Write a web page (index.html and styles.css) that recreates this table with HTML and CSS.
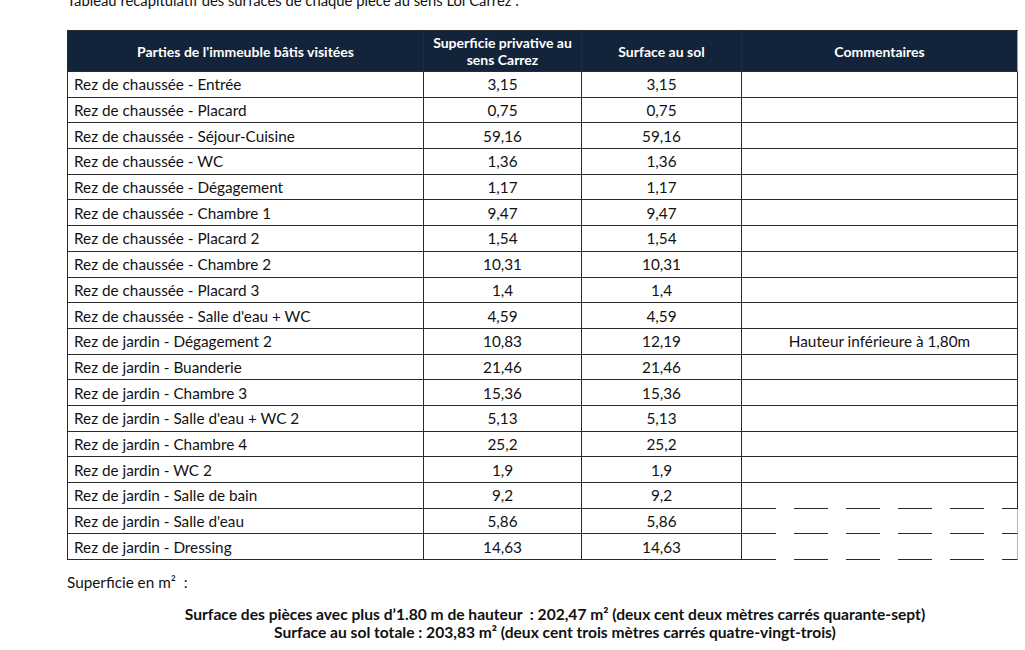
FILE: index.html
```html
<!DOCTYPE html>
<html lang="fr">
<head>
<meta charset="utf-8">
<title>Tableau récapitulatif Loi Carrez</title>
<link rel="stylesheet" href="styles.css">
</head>
<body>
<div class="page">
  <p class="title">Tableau récapitulatif des surfaces de chaque pièce au sens Loi Carrez :</p>
  <table class="surfaces">
    <colgroup>
      <col class="c-room"><col class="c-carrez"><col class="c-sol"><col class="c-comment">
    </colgroup>
    <thead>
      <tr>
        <th>Parties de l'immeuble bâtis visitées</th>
        <th>Superficie privative au<br>sens Carrez</th>
        <th>Surface au sol</th>
        <th>Commentaires</th>
      </tr>
    </thead>
    <tbody>
      <tr><td>Rez de chaussée - Entrée</td><td class="num">3,15</td><td class="num">3,15</td><td></td></tr>
      <tr><td>Rez de chaussée - Placard</td><td class="num">0,75</td><td class="num">0,75</td><td></td></tr>
      <tr><td>Rez de chaussée - Séjour-Cuisine</td><td class="num">59,16</td><td class="num">59,16</td><td></td></tr>
      <tr><td>Rez de chaussée - WC</td><td class="num">1,36</td><td class="num">1,36</td><td></td></tr>
      <tr><td>Rez de chaussée - Dégagement</td><td class="num">1,17</td><td class="num">1,17</td><td></td></tr>
      <tr><td>Rez de chaussée - Chambre 1</td><td class="num">9,47</td><td class="num">9,47</td><td></td></tr>
      <tr><td>Rez de chaussée - Placard 2</td><td class="num">1,54</td><td class="num">1,54</td><td></td></tr>
      <tr><td>Rez de chaussée - Chambre 2</td><td class="num">10,31</td><td class="num">10,31</td><td></td></tr>
      <tr><td>Rez de chaussée - Placard 3</td><td class="num">1,4</td><td class="num">1,4</td><td></td></tr>
      <tr><td>Rez de chaussée - Salle d'eau + WC</td><td class="num">4,59</td><td class="num">4,59</td><td></td></tr>
      <tr><td>Rez de jardin - Dégagement 2</td><td class="num">10,83</td><td class="num">12,19</td><td class="num">Hauteur inférieure à 1,80m</td></tr>
      <tr><td>Rez de jardin - Buanderie</td><td class="num">21,46</td><td class="num">21,46</td><td></td></tr>
      <tr><td>Rez de jardin - Chambre 3</td><td class="num">15,36</td><td class="num">15,36</td><td></td></tr>
      <tr><td>Rez de jardin - Salle d'eau + WC 2</td><td class="num">5,13</td><td class="num">5,13</td><td></td></tr>
      <tr><td>Rez de jardin - Chambre 4</td><td class="num">25,2</td><td class="num">25,2</td><td></td></tr>
      <tr><td>Rez de jardin - WC 2</td><td class="num">1,9</td><td class="num">1,9</td><td></td></tr>
      <tr><td>Rez de jardin - Salle de bain</td><td class="num">9,2</td><td class="num">9,2</td><td class="faded"></td></tr>
      <tr><td>Rez de jardin - Salle d'eau</td><td class="num">5,86</td><td class="num">5,86</td><td class="faded light-edge"></td></tr>
      <tr><td>Rez de jardin - Dressing</td><td class="num">14,63</td><td class="num">14,63</td><td class="faded light-edge"></td></tr>
    </tbody>
  </table>
  <p class="unit">Superficie en m² &nbsp;:</p>
  <div class="summary">
    <p>Surface des pièces avec plus d’1.80 m de hauteur &nbsp;: 202,47 m² (deux cent deux mètres carrés quarante-sept)</p>
    <p>Surface au sol totale : 203,83 m² (deux cent trois mètres carrés quatre-vingt-trois)</p>
  </div>
</div>
</body>
</html>
```

FILE: styles.css
```css
html, body {
  margin: 0;
  padding: 0;
  background: #ffffff;
}

body {
  font-family: "Lato", "Liberation Sans", sans-serif;
  color: #111111;
  overflow: hidden;
  height: 650px;
}

.page {
  padding-left: 67px;
  width: 950px;
}

.title {
  margin: -9px 0 0 0;
  font-size: 14.8px;
  line-height: 18px;
  height: 18px;
  white-space: nowrap;
}

.surfaces {
  margin-top: 21px;
  width: 950px;
  table-layout: fixed;
  border-collapse: separate;
  border-spacing: 0;
  border-top: 1px solid #2a2a2a;
  border-left: 1px solid #2a2a2a;
  font-size: 15.3px;
}

.c-room { width: 356px; }
.c-carrez { width: 158px; }
.c-sol { width: 160px; }
.c-comment { width: 276px; }

.surfaces th {
  background: #13233a;
  color: #ffffff;
  font-weight: 700;
  font-size: 14px;
  line-height: 17px;
  height: 41px;
  padding: 0 4px;
  text-align: center;
  vertical-align: middle;
  border-right: 1px solid #2a2a2a;
  border-bottom: 1px solid #2a2a2a;
  box-sizing: border-box;
}

.surfaces th:last-child {
  border-right-color: #9aa0a8;
}

.surfaces td {
  height: 24.7px;
  padding: 0 6px;
  line-height: 18px;
  vertical-align: middle;
  border-right: 1px solid #2a2a2a;
  border-bottom: 1px solid #2a2a2a;
  white-space: nowrap;
}

.surfaces td.num {
  text-align: center;
}

.surfaces td.faded {
  border-bottom-color: transparent;
  background-image: repeating-linear-gradient(90deg, #2a2a2a 0 34px, rgba(255, 255, 255, 0) 34px 52px);
  background-size: 100% 1px;
  background-position: left bottom;
  background-repeat: no-repeat;
  background-origin: border-box;
  background-clip: border-box;
}

.surfaces td.light-edge {
  border-right-color: #b8b8b8;
}

.unit {
  margin: 13px 0 0 0;
  font-size: 15.3px;
  line-height: 18px;
}

.summary {
  margin-top: 14px;
  padding-left: 26px;
  text-align: center;
  font-weight: 700;
  font-size: 15.6px;
  line-height: 18px;
}

.summary p {
  margin: 0;
  white-space: nowrap;
}
```
